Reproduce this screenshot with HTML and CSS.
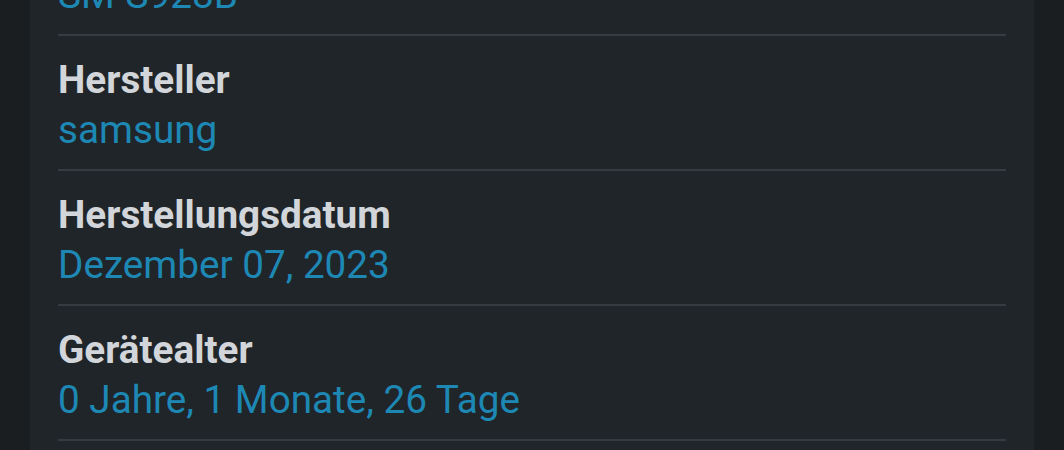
FILE: index.html
```html
<!DOCTYPE html>
<html lang="de">
<head>
<meta charset="UTF-8">
<meta name="viewport" content="width=device-width, initial-scale=1.0">
<title>Geräteinfo</title>
<link rel="stylesheet" href="styles.css">
</head>
<body>
<div class="page">
    <div class="card">
        <div class="row">
            <div class="label">Modell</div>
            <div class="value">SM-S928B</div>
        </div>
        <div class="row">
            <div class="label">Hersteller</div>
            <div class="value">samsung</div>
        </div>
        <div class="row">
            <div class="label">Herstellungsdatum</div>
            <div class="value">Dezember 07, 2023</div>
        </div>
        <div class="row">
            <div class="label">Gerätealter</div>
            <div class="value">0 Jahre, 1 Monate, 26 Tage</div>
        </div>
    </div>
</div>
</body>
</html>
```
FILE: styles.css
```css
body {
    margin: 0;
    padding: 0;
    background-color: #1b1e21;
    font-family: Roboto, "Noto Sans", sans-serif;
    overflow: hidden;
}

.page {
    padding: 0 30px;
    height: 450px;
    overflow: hidden;
}

.card {
    margin-top: -99px;
    background-color: #202529;
    padding: 0 28px 60px;
}

.row {
    padding: 19px 0 14px;
    border-bottom: 2px solid #353b40;
}

.label {
    font-size: 38.7px;
    line-height: 50px;
    font-weight: bold;
    color: #d2d6da;
}

.value {
    font-size: 38.7px;
    line-height: 50px;
    color: #1e88b5;
}
```
